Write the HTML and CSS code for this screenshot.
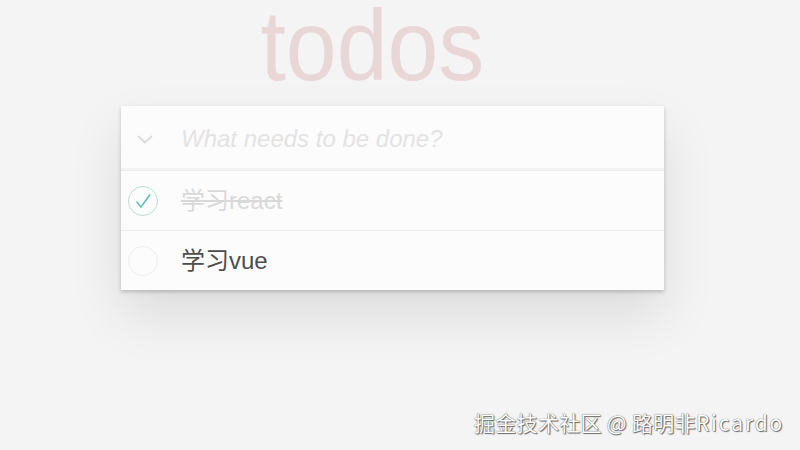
FILE: index.html
```html
<!DOCTYPE html>
<html lang="zh">
<head>
<meta charset="utf-8">
<title>todos</title>
<link rel="stylesheet" href="styles.css">
</head>
<body>
<section class="todoapp">
  <h1 class="title"><span class="title-text">todos</span></h1>
  <div class="card">
    <header class="new-row">
      <span class="toggle-all">
        <svg width="16" height="9" viewBox="0 0 16 9"><path d="M1 1 L8 7.5 L15 1" fill="none" stroke="#dcdcdc" stroke-width="2"/></svg>
      </span>
      <span class="placeholder">What needs to be done?</span>
    </header>
    <ul class="list">
      <li class="item done">
        <span class="check">
          <svg width="30" height="30" viewBox="0 0 30 30"><circle cx="15" cy="15" r="14.5" fill="none" stroke="#bddad5" stroke-width="1"/><path d="M8.5 15.5 L13 21 L22 8.5" fill="none" stroke="#5dc2af" stroke-width="1.6"/></svg>
        </span>
        <span class="label">学习react</span>
      </li>
      <li class="item">
        <span class="check">
          <svg width="30" height="30" viewBox="0 0 30 30"><circle cx="15" cy="15" r="14.5" fill="none" stroke="#ededed" stroke-width="1"/></svg>
        </span>
        <span class="label">学习vue</span>
      </li>
    </ul>
  </div>
</section>
<div class="watermark">掘金技术社区 @ 路明非<span class="latin">Ricardo</span></div>
</body>
</html>
```
FILE: styles.css
```css
html, body {
  margin: 0;
  padding: 0;
}
body {
  background: #f4f4f4;
  font-family: "Liberation Sans", Arial, "Noto Sans CJK SC", sans-serif;
  color: #4d4d4d;
  width: 800px;
  height: 450px;
  overflow: hidden;
}
.todoapp {
  width: 543px;
  margin-left: 121px;
}
.title {
  margin: 0;
  padding-right: 40px;
  text-align: center;
  font-size: 100px;
  font-weight: 400;
  line-height: 90px;
  height: 90px;
  color: rgba(175, 47, 47, 0.15);
}
.title-text {
  display: inline-block;
  transform: scaleX(0.915);
  transform-origin: center;
}
.card {
  margin-top: 16px;
  background: #fdfcfd;
  box-shadow: 0 2px 4px 0 rgba(0, 0, 0, 0.2), 0 25px 50px 0 rgba(0, 0, 0, 0.1);
}
.new-row {
  height: 64px;
  display: flex;
  align-items: center;
  border-bottom: 1px solid #ececec;
  box-shadow: inset 0 -2px 1px rgba(0, 0, 0, 0.03);
}
.toggle-all {
  width: 60px;
  display: flex;
  justify-content: center;
  padding-top: 3px;
  padding-right: 12px;
  box-sizing: border-box;
}
.toggle-all svg {
  display: block;
}
.placeholder {
  font-size: 24px;
  font-style: italic;
  color: #e4e3e4;
  padding-top: 1px;
}
.list {
  list-style: none;
  margin: 0;
  padding: 0;
}
.item {
  height: 59px;
  display: flex;
  align-items: center;
  border-bottom: 1px solid #ededed;
  padding-top: 1px;
  box-sizing: border-box;
  height: 60px;
}
.item:last-child {
  border-bottom: none;
  height: 59px;
}
.check {
  width: 60px;
  display: flex;
  padding-left: 7px;
  box-sizing: border-box;
}
.check svg {
  display: block;
}
.label {
  font-size: 24px;
  line-height: 28.8px;
  font-family: "Liberation Sans", "Noto Sans CJK SC", sans-serif;
  color: #4d4d4d;
}
.done .label {
  color: #d9d9d9;
  text-decoration: line-through;
}
.watermark {
  position: absolute;
  left: 474px;
  top: 407px;
  font-family: "Noto Sans CJK SC", sans-serif;
  font-size: 21px;
  line-height: 30px;
  color: #ffffff;
  letter-spacing: 0.3px;
  text-shadow: 0 0 1px #333, 1px 1px 1px rgba(0,0,0,0.55);
}
.latin {
  letter-spacing: 1.9px;
}
```
